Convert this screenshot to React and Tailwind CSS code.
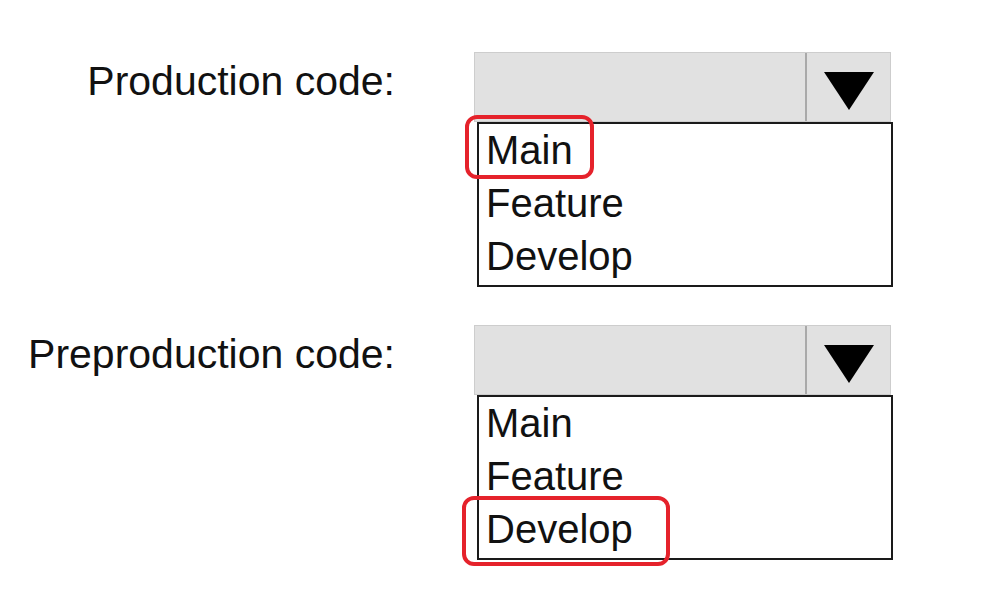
import React from "react";

function Combo({ highlight }) {
  const items = ["Main", "Feature", "Develop"];
  return (
    <div className="flex flex-col w-[419px]">
      <div className="flex h-[70px] w-[417px] bg-[#e1e1e1] border border-[#cdcdcd]">
        <div className="flex-1" />
        <div className="w-[2px] bg-[#a9a9a9]" />
        <div className="w-[83px] flex items-center justify-center pt-[8px]">
          <svg width="50" height="38" viewBox="0 0 50 38">
            <polygon points="0,0 50,0 25,38" fill="#000" />
          </svg>
        </div>
      </div>
      <div className="relative ml-[3px] w-[416px] border-2 border-[#1a1a1a] bg-white pb-[2px] pl-[7px]">
        {items.map((t) => (
          <div key={t} className="text-[40px] leading-[53px] text-[#111]">
            {t}
          </div>
        ))}
        {highlight === "Main" && (
          <div className="absolute left-[-14px] top-[-9px] w-[129px] h-[64px] border-4 border-[#e5222b] rounded-[12px]" />
        )}
        {highlight === "Develop" && (
          <div className="absolute left-[-17px] top-[99px] w-[208px] h-[70px] border-4 border-[#e5222b] rounded-[12px]" />
        )}
      </div>
    </div>
  );
}

function Row({ label, highlight }) {
  return (
    <div className="flex items-start gap-[79px]">
      <div className="w-[395px] text-right text-[41px] leading-[48px] mt-[5px] text-[#111]">
        {label}
      </div>
      <Combo highlight={highlight} />
    </div>
  );
}

export default function App() {
  return (
    <div
      className="min-h-screen w-full bg-white pt-[52px] flex flex-col gap-[38px]"
      style={{ fontFamily: '"Liberation Sans", Arial, sans-serif' }}
    >
      <Row label="Production code:" highlight="Main" />
      <Row label="Preproduction code:" highlight="Develop" />
    </div>
  );
}
